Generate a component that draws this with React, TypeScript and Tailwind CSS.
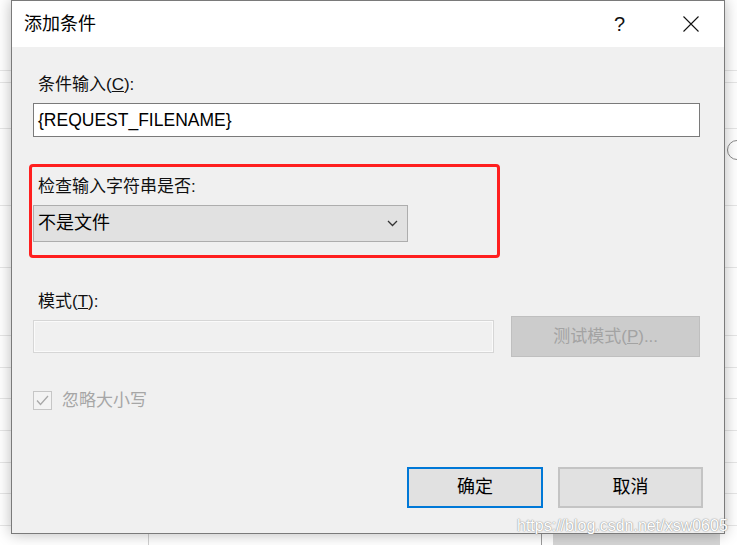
const cjk = "font-['Liberation_Sans','Noto_Sans_CJK_SC',sans-serif]";

function Chevron() {
  return (
    <svg width="11" height="7" viewBox="0 0 11 7" className="text-[#333]">
      <polyline points="1,1 5.5,5.5 10,1" fill="none" stroke="currentColor" strokeWidth="1.3" />
    </svg>
  );
}

function Backdrop() {
  const rows = [70, 82, 128, 205, 267, 335, 367, 398, 430, 462, 493, 525];
  return (
    <div className="absolute inset-0">
      {rows.map((y) => (
        <div key={y} className="absolute left-0 right-0 h-px bg-[#e6e6e6]" style={{ top: y }} />
      ))}
      <div className="absolute top-[533px] bottom-0 left-[148px] w-px bg-[#d0d0d0]" />
      <div className="absolute top-[533px] bottom-0 left-[541px] w-px bg-[#9a9a9a]" />
      <div className="absolute top-[534px] bottom-0 left-[553px] w-[167px] bg-[#d6d6d6]" />
      <div className="absolute top-[140px] left-[727px] w-[20px] h-[20px] rounded-full border border-[#8a8a8a]" />
    </div>
  );
}

export default function App() {
  return (
    <div className={`relative w-[737px] h-[545px] overflow-hidden bg-white ${cjk}`}>
      <Backdrop />

      <div className="absolute left-[11px] top-0 w-[714px] h-[534px] border border-[#7a7a7a] bg-[#f0f0f0] flex flex-col shadow-[0_0_14px_rgba(0,0,0,0.28)]">
        {/* title bar */}
        <div className="h-[46px] bg-white flex items-center pl-[12px] pr-[25px]">
          <span className="text-[18px] text-black leading-none">添加条件</span>
          <span className="ml-auto text-[20px] font-light text-[#111] leading-none">?</span>
          <svg width="16" height="16" viewBox="0 0 16 16" className="ml-[58px]">
            <path d="M0.5 0.5 L15.5 15.5 M15.5 0.5 L0.5 15.5" stroke="#111" strokeWidth="1.1" />
          </svg>
        </div>

        {/* body */}
        <div className="flex-1 flex flex-col pl-[21px] pr-[24px] pb-[25px]">
          <div className="mt-[26px] pl-[5px] text-[17px] leading-[24px] text-[#111]">
            条件输入(<u>C</u>):
          </div>
          <div className="mt-[6px] h-[34px] bg-white border border-[#7a7a7a] flex items-center pl-[4px] text-[17.5px] text-black">
            {"{REQUEST_FILENAME}"}
          </div>

          <div className="mt-[27px] -ml-[4px] w-[471px] border-[3px] border-[#ff1f1f] rounded-[4px] pl-[1px] pt-[8px] pb-[13px]">
            <div className="pl-[5px] text-[17px] leading-[24px] text-[#111]">检查输入字符串是否:</div>
            <div className="mt-[6px] w-[375px] h-[37px] bg-[#e1e1e1] border border-[#adadad] flex items-center pl-[4px] pr-[9px]">
              <span className="text-[18px] text-black">不是文件</span>
              <span className="ml-auto">
                <Chevron />
              </span>
            </div>
          </div>

          <div className="mt-[32px] pl-[5px] text-[17px] leading-[24px] text-[#111]">
            模式(<u>T</u>):
          </div>
          <div className="mt-[2px] flex items-center gap-[17px]">
            <div className="w-[462px] h-[33px] border border-[#d6d6d6] shadow-[inset_0_0_0_1px_#fafafa] bg-[#f0f0f0]" />
            <div className="w-[189px] h-[41px] bg-[#cccccc] border border-[#bfbfbf] flex items-center justify-center text-[17px] text-[#a3a3a3]">
              测试模式(<u>P</u>)...
            </div>
          </div>

          <div className="mt-[31px] flex items-center gap-[10px]">
            <div className="w-[19px] h-[19px] border border-[#c6c6c6] bg-[#f3f3f3] flex items-center justify-center">
              <svg width="13" height="11" viewBox="0 0 13 11">
                <polyline points="1,5.5 4.5,9.5 12,1" fill="none" stroke="#a8a8a8" strokeWidth="1.3" />
              </svg>
            </div>
            <span className="text-[17px] text-[#a6a6a6]">忽略大小写</span>
          </div>

          <div className="mt-auto flex justify-end gap-[15px] -mr-[3px]">
            <div className="w-[136px] h-[41px] bg-[#e1e1e1] border-2 border-[#0078d7] flex items-center justify-center text-[18px] text-black">
              确定
            </div>
            <div className="w-[145px] h-[41px] bg-[#e1e1e1] border-2 border-[#c4c4c4] flex items-center justify-center text-[18px] text-black">
              取消
            </div>
          </div>
        </div>
      </div>

      <div className="absolute left-[517px] top-[514px] font-['Liberation_Sans',sans-serif] text-[16px] text-white [text-shadow:0_0_1.5px_#8c8c8c,0_0_1px_#9a9a9a]">
        https://blog.csdn.net/xsw0605
      </div>
    </div>
  );
}
